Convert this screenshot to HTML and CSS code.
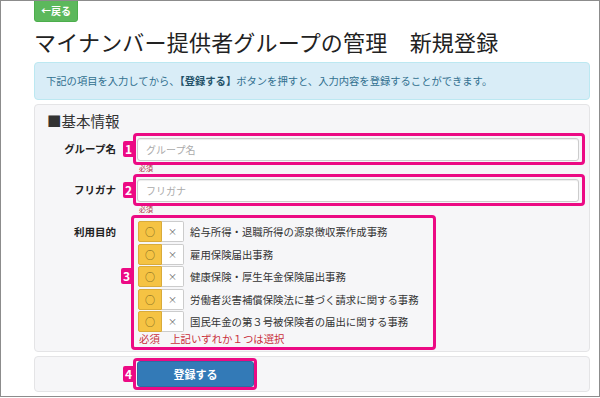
FILE: index.html
```html
<!DOCTYPE html>
<html lang="ja">
<head>
    <meta charset="UTF-8">
    <meta name="viewport" content="width=device-width, initial-scale=1.0">
    <title>マイナンバー提供者グループの管理 新規登録</title>
    <link rel="stylesheet" href="styles.css">
</head>
<body>
    <div class="frame">
        <a class="btn-back" href="#">&#8592;戻る</a>
        <h1 class="title">マイナンバー提供者グループの管理　新規登録</h1>
        <div class="alert">下記の項目を入力してから、<strong>【登録する】</strong>ボタンを押すと、入力内容を登録することができます。</div>

        <div class="panel panel-form">
            <h2 class="section">■基本情報</h2>

            <div class="form-row">
                <label class="form-label" for="groupName">グループ名</label>
                <div class="form-field">
                    <div class="mark">
                        <span class="mark-no">1</span>
                        <input class="text-input" type="text" id="groupName" placeholder="グループ名">
                    </div>
                    <div class="req-small">必須</div>
                </div>
            </div>

            <div class="form-row">
                <label class="form-label" for="groupKana">フリガナ</label>
                <div class="form-field">
                    <div class="mark">
                        <span class="mark-no">2</span>
                        <input class="text-input" type="text" id="groupKana" placeholder="フリガナ">
                    </div>
                    <div class="req-small">必須</div>
                </div>
            </div>

            <div class="form-row">
                <div class="form-label label-top">利用目的</div>
                <div class="form-field">
                    <div class="mark mark-group">
                        <span class="mark-no mark-no-group">3</span>
                        <div class="purpose">
                            <span class="toggle-on">○</span><span class="toggle-off">×</span>
                            <span class="purpose-text">給与所得・退職所得の源泉徴収票作成事務</span>
                        </div>
                        <div class="purpose">
                            <span class="toggle-on">○</span><span class="toggle-off">×</span>
                            <span class="purpose-text">雇用保険届出事務</span>
                        </div>
                        <div class="purpose">
                            <span class="toggle-on">○</span><span class="toggle-off">×</span>
                            <span class="purpose-text">健康保険・厚生年金保険届出事務</span>
                        </div>
                        <div class="purpose">
                            <span class="toggle-on">○</span><span class="toggle-off">×</span>
                            <span class="purpose-text">労働者災害補償保険法に基づく請求に関する事務</span>
                        </div>
                        <div class="purpose">
                            <span class="toggle-on">○</span><span class="toggle-off">×</span>
                            <span class="purpose-text">国民年金の第３号被保険者の届出に関する事務</span>
                        </div>
                        <div class="req-note">必須　上記いずれか１つは選択</div>
                    </div>
                </div>
            </div>
        </div>

        <div class="panel panel-actions">
            <div class="mark mark-btn">
                <span class="mark-no">4</span>
                <button class="btn-submit" type="button">登録する</button>
            </div>
        </div>
    </div>
</body>
</html>
```

FILE: styles.css
```css
body {
    margin: 0;
    padding: 0;
    background-color: #fff;
    font-family: "Noto Sans CJK JP", "Noto Sans", sans-serif;
    color: #333;
}
.frame {
    height: 397px;
    box-sizing: border-box;
    border: 1px solid #8c8c8c;
    padding: 0 9px 0 33px;
    overflow: hidden;
}
.btn-back {
    display: block;
    margin-top: -1px;
    height: 22px;
    width: 44px;
    box-sizing: border-box;
    line-height: 20px;
    text-align: center;
    font-size: 10px;
    font-weight: bold;
    color: #fff;
    text-decoration: none;
    background-color: #5cb85c;
    border: 1px solid #4cae4c;
    border-radius: 0 0 3px 3px;
}
.title {
    margin: 4px 0 6px;
    font-size: 22px;
    line-height: 30px;
    font-weight: normal;
    color: #222;
    letter-spacing: 0.2px;
}
.alert {
    padding: 11px 11px;
    font-size: 10.3px;
    line-height: 14px;
    color: #31708f;
    background-color: #d9edf7;
    border: 1px solid #bce8f1;
    border-radius: 4px;
}
.alert strong {
    color: #245269;
}
.panel {
    margin-top: 4px;
    background-color: #f6f6f8;
    border: 1px solid #e4e4e6;
    border-radius: 4px;
}
.panel-form {
    padding: 6px 4px 1px 12px;
}
.section {
    margin: 0 0 2px;
    font-size: 14.5px;
    line-height: 20px;
    font-weight: normal;
    color: #333;
}
.form-row {
    display: grid;
    grid-template-columns: 86px 1fr;
}
.form-label {
    padding-right: 17px;
    text-align: right;
    font-size: 10.5px;
    font-weight: bold;
    line-height: 32px;
    color: #222;
}
.label-top {
    line-height: 34px;
}
.mark {
    position: relative;
    padding: 2px 3px 1px 1px;
    border: 3px solid #ec0a84;
    border-radius: 4px;
}
.mark-no {
    position: absolute;
    left: -13px;
    top: 50%;
    transform: translateY(-50%);
    width: 11px;
    height: 16px;
    line-height: 16px;
    text-align: center;
    font-size: 12px;
    font-weight: bold;
    color: #fff;
    background-color: #ec0a84;
    border-radius: 2px 0 0 2px;
}
.text-input {
    display: block;
    width: 100%;
    height: 23px;
    box-sizing: border-box;
    padding: 0 8px;
    font-family: inherit;
    font-size: 10px;
    color: #555;
    background-color: #fff;
    border: 1px solid #ccc;
    border-radius: 3px;
    box-shadow: inset 0 1px 1px rgba(0, 0, 0, 0.075);
}
.text-input::placeholder {
    color: #aaa;
}
.req-small {
    height: 9px;
    padding-left: 6px;
    font-size: 7px;
    line-height: 7px;
    color: #b03040;
}
.mark-group {
    width: 295px;
    margin-left: -2px;
    padding: 3px 0 0 4px;
}
.mark-no-group {
    top: 50px;
    transform: none;
}
.purpose {
    display: flex;
    align-items: center;
    height: 21px;
    margin-bottom: 1.5px;
}
.toggle-on,
.toggle-off {
    height: 21px;
    box-sizing: border-box;
    line-height: 19px;
    text-align: center;
    border: 1px solid #ccc;
}
.toggle-on {
    width: 24px;
    font-size: 10px;
    color: #6b5a1c;
    background-color: #f5c343;
    border-color: #d9ab3a;
    border-radius: 2px 0 0 2px;
}
.toggle-off {
    width: 22px;
    font-size: 9px;
    color: #666;
    background-color: #fff;
    border-left: none;
    border-radius: 0 2px 2px 0;
}
.purpose-text {
    margin-left: 6px;
    font-size: 10.4px;
    color: #333;
}
.req-note {
    height: 14px;
    margin-top: -1px;
    padding-left: 1px;
    font-size: 10.4px;
    line-height: 12px;
    color: #c9303c;
}
.panel-actions {
    padding: 1px 0 1px 98px;
}
.mark-btn {
    display: inline-block;
    padding: 0 0 0 1px;
    vertical-align: top;
}
.btn-submit {
    display: block;
    width: 117px;
    height: 26px;
    padding: 0;
    font-family: inherit;
    font-size: 11px;
    font-weight: bold;
    color: #fff;
    background-color: #337ab7;
    border: 1px solid #2e6da4;
    border-radius: 3px;
    cursor: pointer;
}
```
